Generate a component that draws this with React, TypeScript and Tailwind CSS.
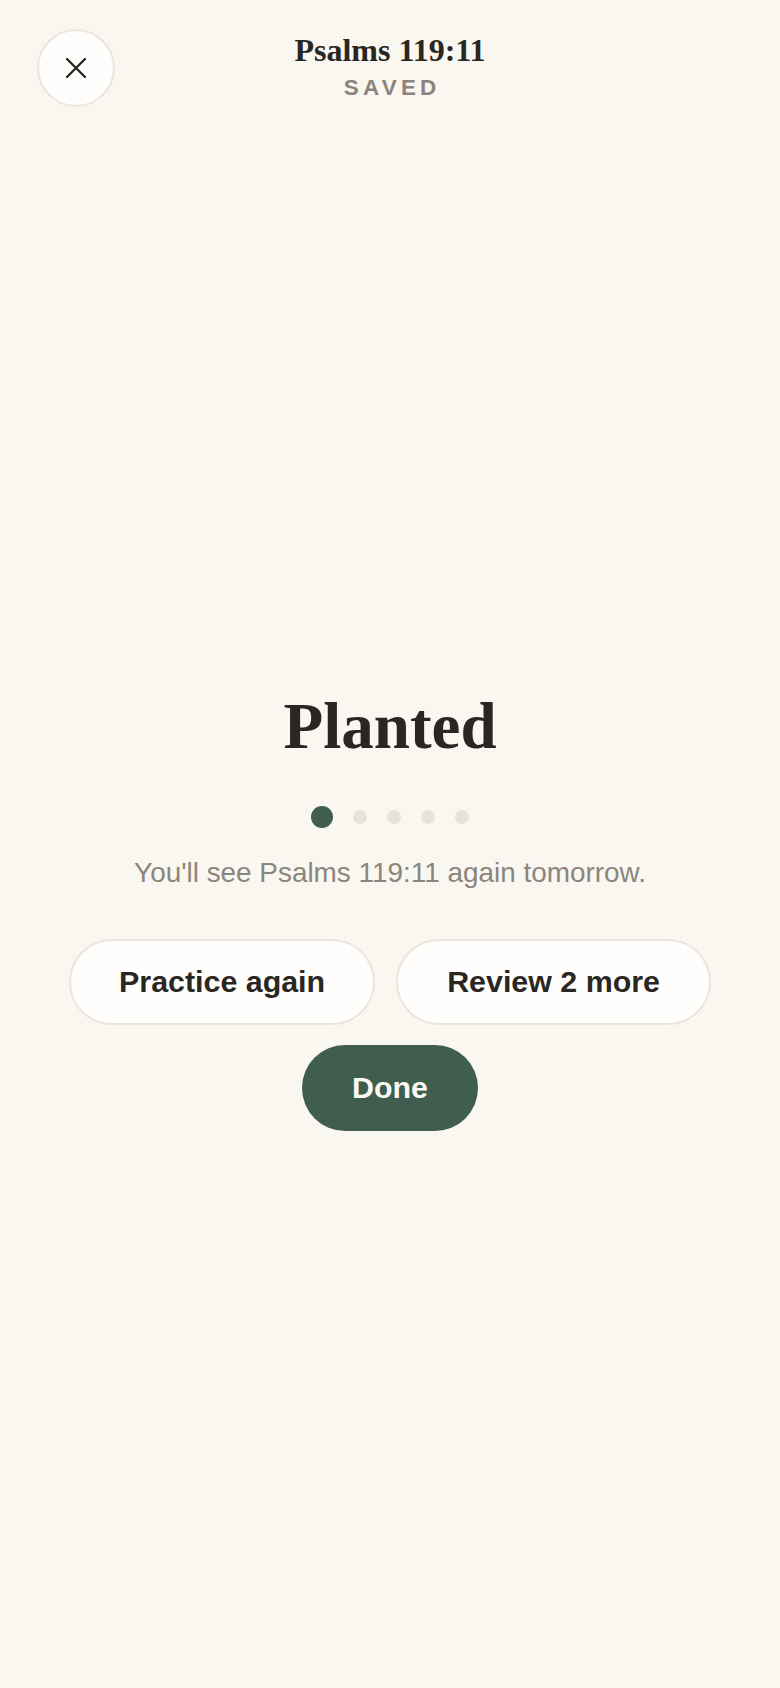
import React from "react";

const serif = "font-['Liberation_Serif','Times_New_Roman',serif]";
const sans = "font-['Liberation_Sans',Arial,sans-serif]";

function CloseIcon() {
  return (
    <svg width="22" height="22" viewBox="0 0 22 22" fill="none" aria-hidden="true">
      <path d="M2 2L20 20M20 2L2 20" stroke="#2a2723" strokeWidth="2.3" strokeLinecap="round" />
    </svg>
  );
}

function ProgressDots({ total, current }: { total: number; current: number }) {
  return (
    <div className="flex items-center gap-[20px]">
      {Array.from({ length: total }).map((_, i) =>
        i === current ? (
          <span key={i} className="block h-[22px] w-[22px] rounded-full bg-[#3f5e50]" />
        ) : (
          <span key={i} className="block h-[14px] w-[14px] rounded-full bg-[#e7e3db]" />
        )
      )}
    </div>
  );
}

export default function App() {
  return (
    <div className={`min-h-[1688px] w-full bg-[#faf6f0] flex flex-col ${sans}`}>
      <header className="grid grid-cols-[78px_1fr_78px] items-start px-[37px] pt-[29px]">
        <button
          type="button"
          aria-label="Close"
          className="flex h-[78px] w-[78px] items-center justify-center rounded-full border-2 border-[#ebe6dd] bg-[#fffefc]"
        >
          <CloseIcon />
        </button>
        <div className="flex flex-col items-center pt-[2px]">
          <h1 className={`${serif} text-[32px] font-bold leading-[1.2] text-[#2a2723]`}>Psalms 119:11</h1>
          <p className="mt-[6px] pl-[0.19em] text-[22.4px] font-bold leading-[1.2] tracking-[0.19em] text-[#8a857c]">
            SAVED
          </p>
        </div>
        <div />
      </header>

      <main className="flex flex-col items-center pt-[584px]">
        <h2 className={`${serif} text-[65px] font-bold leading-[1.1] text-[#2a2723]`}>Planted</h2>

        <div className="mt-[43px]">
          <ProgressDots total={5} current={0} />
        </div>

        <p className="mt-[25px] text-[27.9px] leading-[1.4] text-[#8b867d]">
          You'll see Psalms 119:11 again tomorrow.
        </p>

        <div className="mt-[47px] flex gap-[21px]">
          <button
            type="button"
            className="flex h-[86px] items-center justify-center rounded-full border-2 border-[#ebe6dd] bg-[#fffefc] px-[48px] text-[30.4px] font-bold text-[#2a2723]"
          >
            Practice again
          </button>
          <button
            type="button"
            className="flex h-[86px] items-center justify-center rounded-full border-2 border-[#ebe6dd] bg-[#fffefc] px-[49px] text-[30.4px] font-bold text-[#2a2723]"
          >
            Review 2 more
          </button>
        </div>

        <button
          type="button"
          className="mt-[20px] flex h-[86px] items-center justify-center rounded-full bg-[#3f5e50] px-[50px] text-[30.4px] font-bold text-[#fbf8f2]"
        >
          Done
        </button>
      </main>
    </div>
  );
}
